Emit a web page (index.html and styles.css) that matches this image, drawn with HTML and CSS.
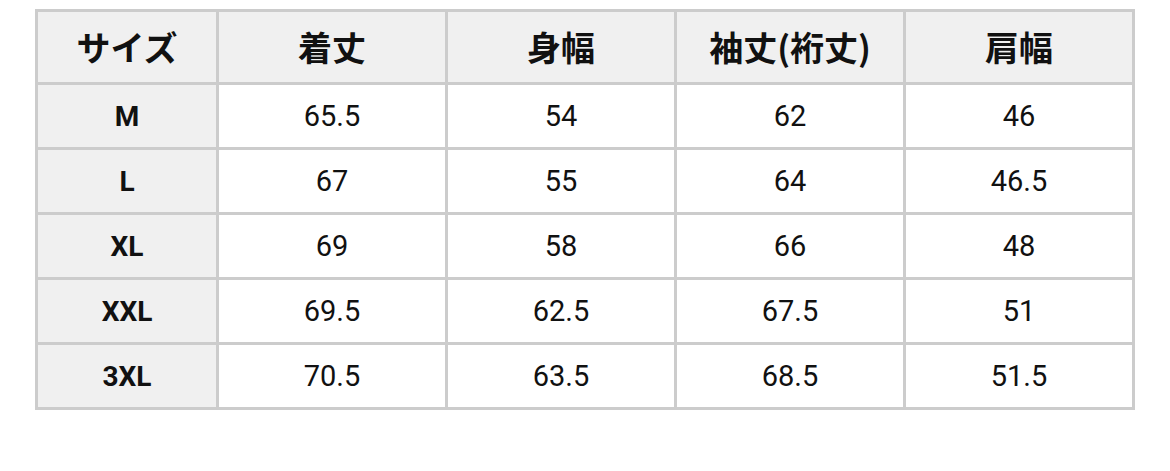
FILE: index.html
```html
<!DOCTYPE html>
<html lang="ja">
<head>
<meta charset="utf-8">
<link rel="stylesheet" href="styles.css">
</head>
<body>
<table class="size-table">
  <thead>
    <tr>
      <th class="col-size">サイズ</th>
      <th>着丈</th>
      <th>身幅</th>
      <th>袖丈(裄丈)</th>
      <th>肩幅</th>
    </tr>
  </thead>
  <tbody>
    <tr><th>M</th><td>65.5</td><td>54</td><td>62</td><td>46</td></tr>
    <tr><th>L</th><td>67</td><td>55</td><td>64</td><td>46.5</td></tr>
    <tr><th>XL</th><td>69</td><td>58</td><td>66</td><td>48</td></tr>
    <tr><th>XXL</th><td>69.5</td><td>62.5</td><td>67.5</td><td>51</td></tr>
    <tr><th>3XL</th><td>70.5</td><td>63.5</td><td>68.5</td><td>51.5</td></tr>
  </tbody>
</table>
</body>
</html>
```
FILE: styles.css
```css
html, body {
  margin: 0;
  padding: 0;
  background: #ffffff;
}
body {
  padding: 9px 0 0 35px;
  font-family: Roboto, "Noto Sans CJK JP", sans-serif;
  color: #111111;
}
.size-table {
  border-collapse: collapse;
  table-layout: fixed;
  width: 1100px;
}
.size-table th,
.size-table td {
  border: 3px solid #cccccc;
  padding: 0;
  text-align: center;
  vertical-align: middle;
}
.size-table thead th {
  background: #f0f0f0;
  height: 70px;
  font-family: "Noto Sans CJK JP", sans-serif;
  font-weight: 700;
  font-size: 34px;
  line-height: 1;
  width: 226px;
}
.size-table thead th.col-size {
  width: 178px;
}
.size-table tbody th,
.size-table tbody td {
  height: 62px;
  font-size: 29px;
}
.size-table tbody th {
  background: #f0f0f0;
  font-weight: 700;
  font-size: 28px;
}
.size-table tbody td {
  font-weight: 400;
  background: #ffffff;
}
```
